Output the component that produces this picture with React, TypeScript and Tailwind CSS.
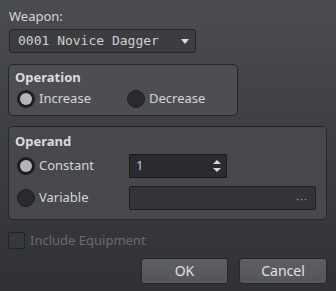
import React from "react";

function Radio({ checked, label }: { checked: boolean; label: string }) {
  return (
    <div className="flex items-center gap-[4px]">
      <div
        className={
          "w-[18px] h-[18px] rounded-full flex items-center justify-center " +
          (checked ? "bg-[#1e1f22]" : "bg-[#2a2b2e] border border-[#1e1f21]")
        }
      >
        {checked && <div className="w-[12px] h-[12px] rounded-full bg-[#b3b4b6]" />}
      </div>
      <span className="text-[13px] text-[#d4d4d6]">{label}</span>
    </div>
  );
}

export default function App() {
  return (
    <div
      className="w-[336px] h-[291px] bg-gradient-to-b from-[#4b4c50] to-[#303135] flex flex-col px-[8px] pt-[7px]"
      style={{ fontFamily: '"Noto Sans", "Open Sans", sans-serif' }}
    >
      <div className="pl-[1px] text-[13px] leading-[18px] text-[#d6d6d8]">Weapon:</div>
      <div className="mt-[4px] ml-[1px] w-[187px] h-[24px] rounded-[3px] bg-[#3c3d41] border border-[#26272a] flex items-center pl-[8px] pr-[6px]">
        <span className="flex-1 text-[13px] text-[#d0d0d2]" style={{ fontFamily: '"DejaVu Sans Mono", monospace' }}>
          0001 Novice Dagger
        </span>
        <svg width="8" height="5" viewBox="0 0 8 5">
          <path d="M0 0 L8 0 L4 5 Z" fill="#d8d8da" />
        </svg>
      </div>

      <div className="mt-[11px] w-[230px] h-[52px] rounded-[5px] bg-[#4d4e52] border border-[#26272a] pl-[6px] pt-[3px]">
        <div className="text-[13px] font-bold leading-[18px] text-[#dcdcde]">Operation</div>
        <div className="flex items-center mt-[3px] pl-[2px]">
          <div className="w-[110px]">
            <Radio checked label="Increase" />
          </div>
          <Radio checked={false} label="Decrease" />
        </div>
      </div>

      <div className="mt-[10px] w-[319px] h-[94px] rounded-[5px] bg-[#47484c] border border-[#26272a] pl-[6px] pt-[5px]">
        <div className="text-[13px] font-bold leading-[18px] text-[#dcdcde]">Operand</div>
        <div className="flex items-center mt-[4px] pl-[2px]">
          <div className="w-[112px]">
            <Radio checked label="Constant" />
          </div>
          <div className="w-[98px] h-[24px] bg-[#2a2b2e] border border-[#1b1c1e] flex items-center pl-[6px] pr-[5px]">
            <span className="flex-1 text-[13px] text-[#c8c8ca]">1</span>
            <svg width="8" height="14" viewBox="0 0 8 14">
              <path d="M0 5 L8 5 L4 1 Z" fill="#d8d8da" />
              <path d="M0 9 L8 9 L4 13 Z" fill="#d8d8da" />
            </svg>
          </div>
        </div>
        <div className="flex items-center mt-[8px] pl-[2px]">
          <div className="w-[112px]">
            <Radio checked={false} label="Variable" />
          </div>
          <div className="w-[187px] h-[24px] rounded-[2px] bg-[#333438] border border-[#1f2023] flex items-center justify-end pr-[7px]">
            <span className="text-[11px] tracking-[1px] text-[#a8a8aa] leading-none">···</span>
          </div>
        </div>
      </div>

      <div className="mt-[11px] flex items-center gap-[5px]">
        <div className="w-[17px] h-[17px] rounded-[2px] bg-[#36373a] border border-[#222326]" />
        <span className="text-[13px] text-[#6a6b6f]">Include Equipment</span>
      </div>

      <div className="mt-[7px] flex justify-end gap-[11px] pr-[1px]">
        <button className="w-[87px] h-[26px] rounded-[3px] bg-gradient-to-b from-[#5e5f63] to-[#55565a] border border-[#26272a] text-[14px] text-[#e0e0e2]">
          OK
        </button>
        <button className="w-[88px] h-[26px] rounded-[3px] bg-gradient-to-b from-[#5e5f63] to-[#55565a] border border-[#26272a] text-[14px] text-[#e0e0e2]">
          Cancel
        </button>
      </div>
    </div>
  );
}
